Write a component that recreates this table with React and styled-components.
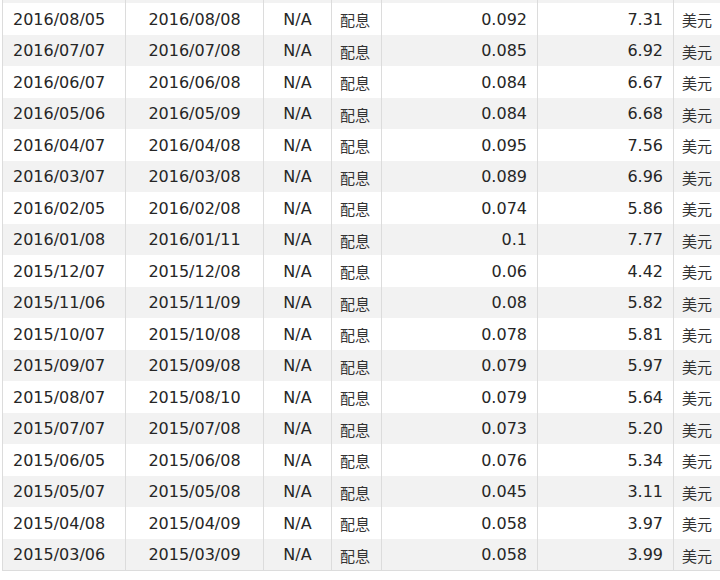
import React from "react";
import styled, { createGlobalStyle } from "styled-components";

const GlobalStyle = createGlobalStyle`
  html, body { margin: 0; padding: 0; background: #ffffff; }
  body { width: 720px; height: 580px; overflow: hidden; }
`;

const Page = styled.div`
  width: 720px;
  height: 580px;
  overflow: hidden;
  padding-left: 2px;
  box-sizing: border-box;
  font-family: "DejaVu Sans", "Noto Sans CJK JP", sans-serif;
  font-size: 16px;
  color: #262626;
`;

const Table = styled.div`
  width: 740px;
  border-bottom: 1px solid #dcdcdc;
`;

const Row = styled.div`
  display: grid;
  grid-template-columns: 123px 138px 68px 50px 156px 136px 1fr;
  height: ${(p) => (p.$cut ? "3px" : "31.5px")};
  background: ${(p) => (p.$alt ? "#f2f2f2" : "#ffffff")};
`;

const Cell = styled.div`
  box-sizing: border-box;
  border-left: 1px solid #dcdcdc;
  display: flex;
  align-items: center;
  justify-content: ${(p) =>
    p.$align === "right" ? "flex-end" : p.$align === "center" ? "center" : "flex-start"};
  padding: ${(p) => p.$pad || "0"};
  padding-top: 2px;
  white-space: nowrap;
  overflow: hidden;
  line-height: 1;
`;

const Cjk = styled.span`
  font-family: "Noto Sans CJK JP", sans-serif;
  font-size: 15px;
  font-weight: 400;
  color: #333333;
`;

const rows = [
  ["2016/08/05", "2016/08/08", "0.092", "7.31"],
  ["2016/07/07", "2016/07/08", "0.085", "6.92"],
  ["2016/06/07", "2016/06/08", "0.084", "6.67"],
  ["2016/05/06", "2016/05/09", "0.084", "6.68"],
  ["2016/04/07", "2016/04/08", "0.095", "7.56"],
  ["2016/03/07", "2016/03/08", "0.089", "6.96"],
  ["2016/02/05", "2016/02/08", "0.074", "5.86"],
  ["2016/01/08", "2016/01/11", "0.1", "7.77"],
  ["2015/12/07", "2015/12/08", "0.06", "4.42"],
  ["2015/11/06", "2015/11/09", "0.08", "5.82"],
  ["2015/10/07", "2015/10/08", "0.078", "5.81"],
  ["2015/09/07", "2015/09/08", "0.079", "5.97"],
  ["2015/08/07", "2015/08/10", "0.079", "5.64"],
  ["2015/07/07", "2015/07/08", "0.073", "5.20"],
  ["2015/06/05", "2015/06/08", "0.076", "5.34"],
  ["2015/05/07", "2015/05/08", "0.045", "3.11"],
  ["2015/04/08", "2015/04/09", "0.058", "3.97"],
  ["2015/03/06", "2015/03/09", "0.058", "3.99"],
];

export default function App() {
  return (
    <>
      <GlobalStyle />
      <Page>
        <Table>
          <Row $cut $alt>
            <Cell />
            <Cell />
            <Cell />
            <Cell />
            <Cell />
            <Cell />
            <Cell />
          </Row>
          {rows.map((r, i) => (
            <Row key={r[0]} $alt={i % 2 === 1}>
              <Cell $pad="0 0 0 10px">{r[0]}</Cell>
              <Cell $align="center">{r[1]}</Cell>
              <Cell $align="center">N/A</Cell>
              <Cell $pad="0 0 0 8px">
                <Cjk>配息</Cjk>
              </Cell>
              <Cell $align="right" $pad="0 10px 0 0">{r[2]}</Cell>
              <Cell $align="right" $pad="0 10px 0 0">{r[3]}</Cell>
              <Cell $pad="0 0 0 8px">
                <Cjk>美元</Cjk>
              </Cell>
            </Row>
          ))}
        </Table>
      </Page>
    </>
  );
}
